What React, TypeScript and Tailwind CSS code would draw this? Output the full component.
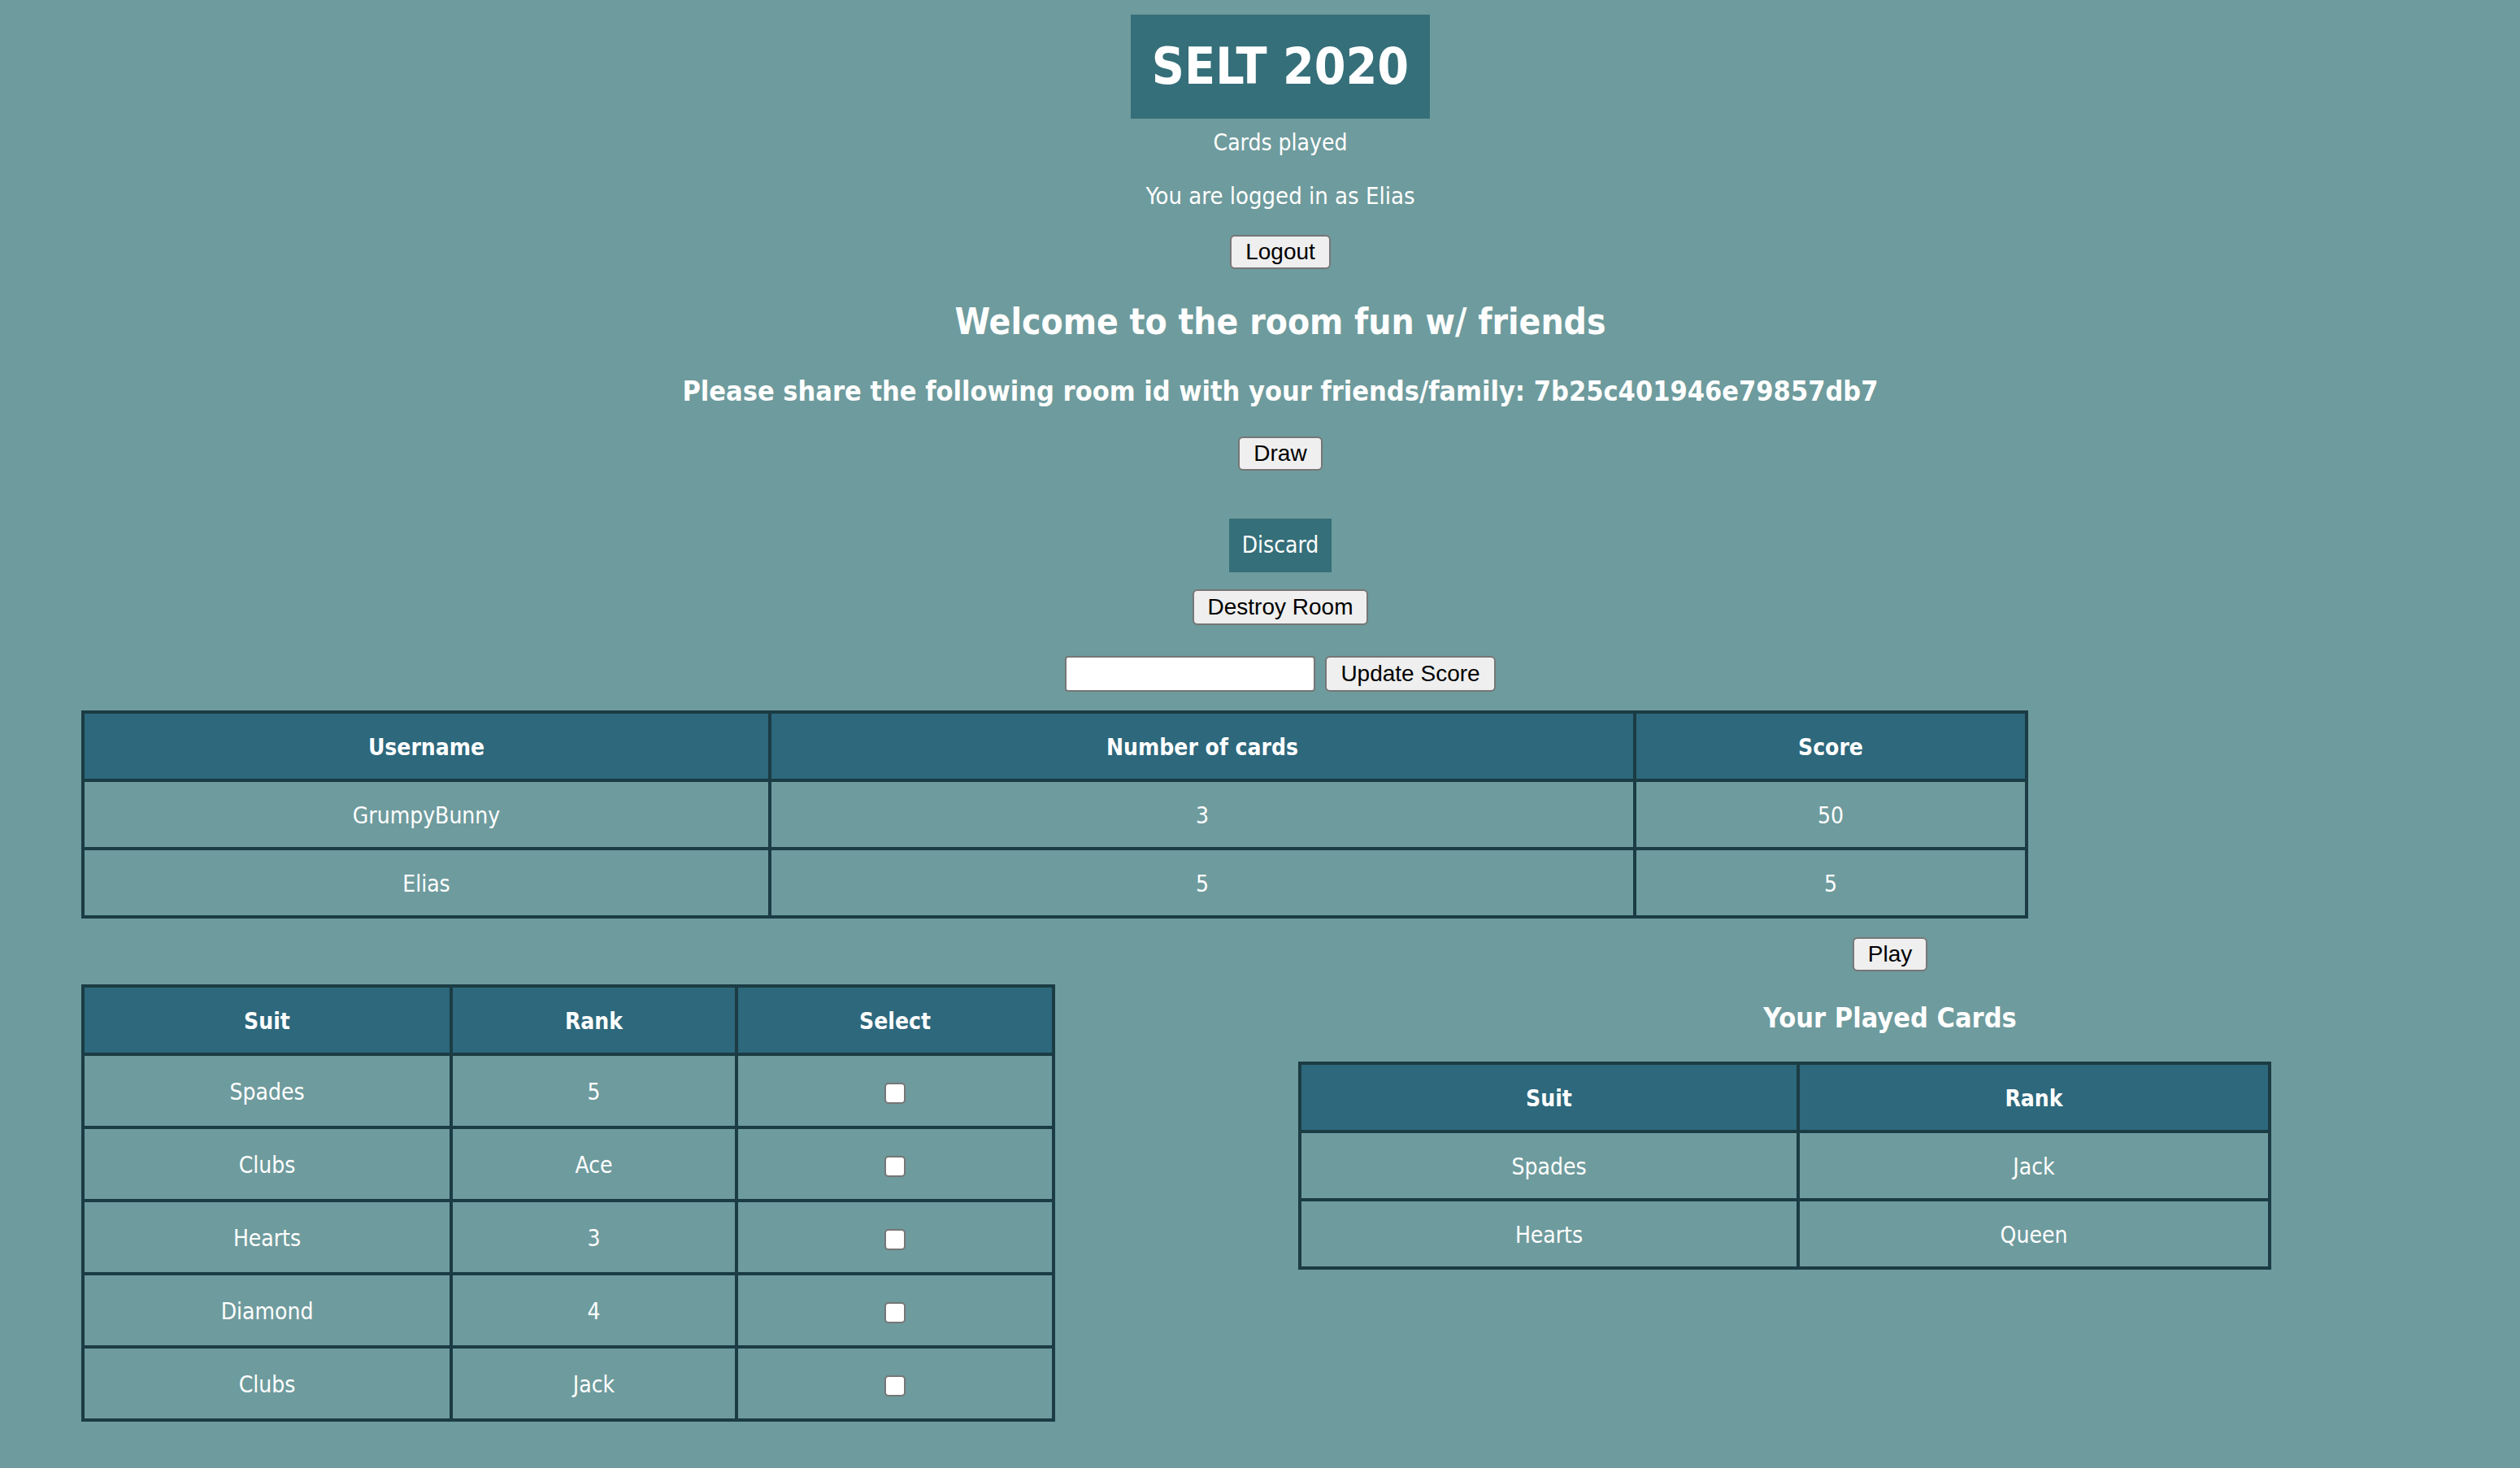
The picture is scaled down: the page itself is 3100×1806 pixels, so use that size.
import type { FC } from "react";

// ─── DATA ─────────────────────────────────────────────────────────────────────

const players = [
  { name: "GrumpyBunny", cards: 3, score: 50 },
  { name: "Elias", cards: 5, score: 5 },
];

const hand = [
  { suit: "Spades", rank: "5" },
  { suit: "Clubs", rank: "Ace" },
  { suit: "Hearts", rank: "3" },
  { suit: "Diamond", rank: "4" },
  { suit: "Clubs", rank: "Jack" },
];

const played = [
  { suit: "Spades", rank: "Jack" },
  { suit: "Hearts", rank: "Queen" },
];

// ─── SMALL PIECES ─────────────────────────────────────────────────────────────

const Btn: FC<{ label: string; className?: string }> = ({ label, className = "" }) => (
  <button
    className={`h-[42px] px-[17px] bg-[#efefef] border-2 border-[#767676] rounded-[6px] text-black text-[28px] leading-none font-['Liberation_Sans',Arial,sans-serif] ${className}`}
  >
    {label}
  </button>
);

const th =
  "border-4 border-[#1b3c44] bg-[#2d687c] pt-[26px] pb-[22px] leading-[32px] text-[28px] font-bold text-white text-center";
const td =
  "border-4 border-[#1b3c44] pt-[26px] pb-[22px] leading-[32px] text-[28px] text-white text-center";

// ─── APP ──────────────────────────────────────────────────────────────────────

export default function App() {
  return (
    <div className="min-h-[1806px] w-full bg-[#6e9b9d] text-white font-['DejaVu_Sans_Condensed','DejaVu_Sans',sans-serif] overflow-hidden">
      {/* ── Top controls ── */}
      <div className="flex flex-col items-center pl-[50px]">
        <div className="mt-[18px] h-[128px] px-[26px] flex items-center bg-[#356f79]">
          <h1 className="text-[62px] font-bold leading-none">SELT 2020</h1>
        </div>
        <p className="mt-[12px] text-[28px] leading-[36px]">Cards played</p>
        <p className="mt-[29px] text-[29px] leading-[36px]">You are logged in as Elias</p>
        <Btn label="Logout" className="mt-[30px]" />
        <h2 className="mt-[40px] text-[44px] leading-[50px] font-bold">
          Welcome to the room fun w/ friends
        </h2>
        <h3 className="mt-[38px] text-[34px] leading-[44px] font-bold">
          Please share the following room id with your friends/family: 7b25c401946e79857db7
        </h3>
        <Btn label="Draw" className="mt-[34px]" />
        <div className="mt-[59px] h-[66px] w-[126px] flex items-center justify-center bg-[#356f79] text-[28px]">
          Discard
        </div>
        <Btn label="Destroy Room" className="mt-[21px] h-[44px]" />
        <div className="mt-[38px] flex items-center gap-[12px]">
          <input
            type="text"
            className="h-[44px] w-[308px] bg-white border-2 border-[#767676] rounded-[4px]"
          />
          <Btn label="Update Score" className="h-[44px]" />
        </div>
      </div>

      {/* ── Players table ── */}
      <table className="mt-[23px] ml-[100px] w-[2391px] table-fixed border-collapse">
        <colgroup>
          <col className="w-[845px]" />
          <col className="w-[1064px]" />
          <col className="w-[482px]" />
        </colgroup>
        <thead>
          <tr>
            <th className={th}>Username</th>
            <th className={th}>Number of cards</th>
            <th className={th}>Score</th>
          </tr>
        </thead>
        <tbody>
          {players.map((p) => (
            <tr key={p.name}>
              <td className={td}>{p.name}</td>
              <td className={td}>{p.cards}</td>
              <td className={td}>{p.score}</td>
            </tr>
          ))}
        </tbody>
      </table>

      {/* ── Hand + played cards ── */}
      <div className="mt-[23px] flex items-start">
        <div className="w-[1550px] pl-[100px] pt-[58px]">
          <table className="w-[1194px] table-fixed border-collapse">
            <colgroup>
              <col className="w-[453px]" />
              <col className="w-[351px]" />
              <col className="w-[390px]" />
            </colgroup>
            <thead>
              <tr>
                <th className={th}>Suit</th>
                <th className={th}>Rank</th>
                <th className={th}>Select</th>
              </tr>
            </thead>
            <tbody>
              {hand.map((c, i) => (
                <tr key={i}>
                  <td className={`${td} leading-[38px]`}>{c.suit}</td>
                  <td className={`${td} leading-[38px]`}>{c.rank}</td>
                  <td className={`${td} leading-[38px]`}>
                    <input
                      type="checkbox"
                      defaultChecked={false}
                      className="appearance-none align-middle w-[26px] h-[26px] bg-white border-2 border-[#767676] rounded-[5px]"
                    />
                  </td>
                </tr>
              ))}
            </tbody>
          </table>
        </div>

        <div className="w-[1550px] flex flex-col items-center">
          <Btn label="Play" className="h-[41px]" />
          <h3 className="mt-[35px] text-[34px] leading-[44px] font-bold">Your Played Cards</h3>
          <table className="mt-[32px] ml-[47px] self-start w-[1193px] table-fixed border-collapse">
            <colgroup>
              <col className="w-[613px]" />
              <col className="w-[580px]" />
            </colgroup>
            <thead>
              <tr>
                <th className={th}>Suit</th>
                <th className={th}>Rank</th>
              </tr>
            </thead>
            <tbody>
              {played.map((c, i) => (
                <tr key={i}>
                  <td className={td}>{c.suit}</td>
                  <td className={td}>{c.rank}</td>
                </tr>
              ))}
            </tbody>
          </table>
        </div>
      </div>
    </div>
  );
}
